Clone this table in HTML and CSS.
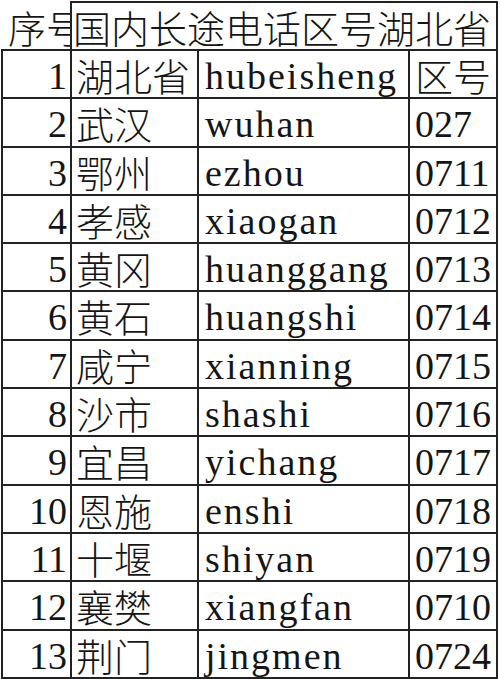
FILE: index.html
```html
<!DOCTYPE html>
<html lang="zh-CN">
<head>
<meta charset="utf-8">
<title>湖北省长途电话区号</title>
<link rel="stylesheet" href="styles.css">
</head>
<body>
<div class="sheet">
  <div class="cell head-no">序号</div>
  <div class="cell head-title">国内长途电话区号湖北省</div>

  <div class="cell no">1</div><div class="cell zh">湖北省</div><div class="cell py">hubeisheng</div><div class="cell code zh">区号</div>
  <div class="cell no">2</div><div class="cell zh">武汉</div><div class="cell py">wuhan</div><div class="cell code">027</div>
  <div class="cell no">3</div><div class="cell zh">鄂州</div><div class="cell py">ezhou</div><div class="cell code">0711</div>
  <div class="cell no">4</div><div class="cell zh">孝感</div><div class="cell py">xiaogan</div><div class="cell code">0712</div>
  <div class="cell no">5</div><div class="cell zh">黄冈</div><div class="cell py">huanggang</div><div class="cell code">0713</div>
  <div class="cell no">6</div><div class="cell zh">黄石</div><div class="cell py">huangshi</div><div class="cell code">0714</div>
  <div class="cell no">7</div><div class="cell zh">咸宁</div><div class="cell py">xianning</div><div class="cell code">0715</div>
  <div class="cell no">8</div><div class="cell zh">沙市</div><div class="cell py">shashi</div><div class="cell code">0716</div>
  <div class="cell no">9</div><div class="cell zh">宜昌</div><div class="cell py">yichang</div><div class="cell code">0717</div>
  <div class="cell no">10</div><div class="cell zh">恩施</div><div class="cell py">enshi</div><div class="cell code">0718</div>
  <div class="cell no">11</div><div class="cell zh">十堰</div><div class="cell py">shiyan</div><div class="cell code">0719</div>
  <div class="cell no">12</div><div class="cell zh">襄樊</div><div class="cell py">xiangfan</div><div class="cell code">0710</div>
  <div class="cell no">13</div><div class="cell zh">荆门</div><div class="cell py">jingmen</div><div class="cell code">0724</div>
</div>
</body>
</html>
```

FILE: styles.css
```css
html, body {
  margin: 0;
  padding: 0;
  background: #ffffff;
}

body {
  color: #151515;
  font-family: "Liberation Serif", "Noto Sans CJK SC", serif;
}

.sheet {
  display: grid;
  grid-template-columns: 71px 127px 211px 88px;
  grid-template-rows: 51px repeat(13, 48.3px);
  padding-left: 1px;
}

.cell {
  box-sizing: border-box;
  border-right: 2px solid #222222;
  border-bottom: 2px solid #222222;
  white-space: nowrap;
  font-size: 38px;
  line-height: 44px;
  padding-top: 3px;
  font-family: "Liberation Serif", "Noto Sans CJK SC", serif;
}

.zh,
.head-no,
.head-title {
  font-family: "Noto Sans CJK SC", sans-serif;
  font-weight: 300;
  padding-top: 2px;
}

.head-no {
  margin-top: 1px;
  padding-top: 4px;
  padding-left: 7px;
  overflow: hidden;
}

.head-title {
  grid-column: span 3;
  margin-top: 1px;
  border-top: 2px solid #222222;
  padding-left: 1px;
}

.no {
  border-left: 2px solid #222222;
  text-align: right;
  padding-right: 3px;
}

.zh {
  padding-left: 4px;
}

.py {
  padding-left: 6px;
  letter-spacing: 2px;
}

.code {
  padding-left: 5px;
}
```
